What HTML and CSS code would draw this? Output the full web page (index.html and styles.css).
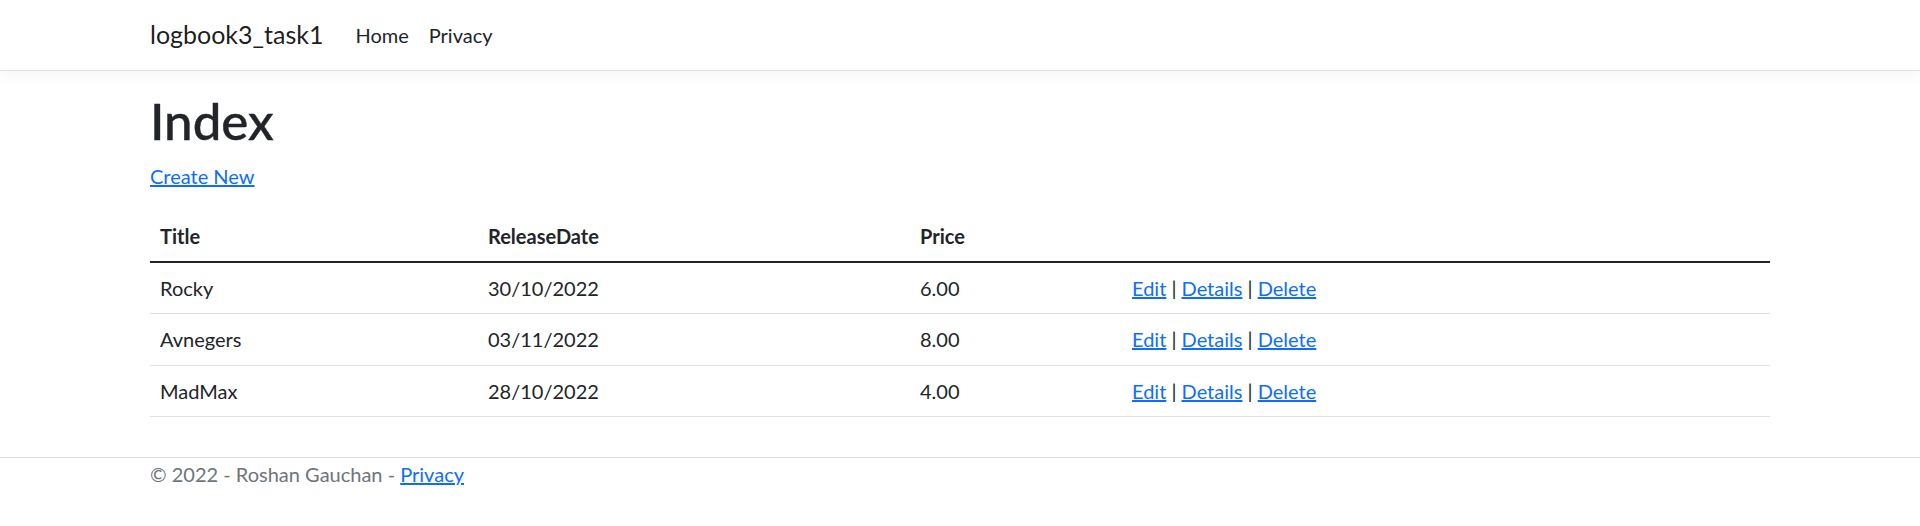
FILE: index.html
```html
<!DOCTYPE html>
<html lang="en">
<head>
<meta charset="utf-8">
<title>Index - logbook3_task1</title>
<link rel="stylesheet" href="styles.css">
</head>
<body>
<header>
  <nav class="navbar">
    <div class="container nav-inner">
      <a class="brand" href="#">logbook3_task1</a>
      <ul class="nav-list">
        <li><a class="nav-link" href="#">Home</a></li>
        <li><a class="nav-link" href="#">Privacy</a></li>
      </ul>
    </div>
  </nav>
</header>
<div class="container">
  <main class="main">
    <h1 class="title">Index</h1>
    <p class="create"><a class="link" href="#">Create New</a></p>
    <table class="table">
      <colgroup>
        <col class="c1"><col class="c2"><col class="c3"><col class="c4">
      </colgroup>
      <thead>
        <tr><th>Title</th><th>ReleaseDate</th><th>Price</th><th></th></tr>
      </thead>
      <tbody>
        <tr><td>Rocky</td><td>30/10/2022</td><td>6.00</td><td><a class="link" href="#">Edit</a> | <a class="link" href="#">Details</a> | <a class="link" href="#">Delete</a></td></tr>
        <tr><td>Avnegers</td><td>03/11/2022</td><td>8.00</td><td><a class="link" href="#">Edit</a> | <a class="link" href="#">Details</a> | <a class="link" href="#">Delete</a></td></tr>
        <tr><td>MadMax</td><td>28/10/2022</td><td>4.00</td><td><a class="link" href="#">Edit</a> | <a class="link" href="#">Details</a> | <a class="link" href="#">Delete</a></td></tr>
      </tbody>
    </table>
  </main>
</div>
<footer class="footer">
  <div class="container">&copy; 2022 - Roshan Gauchan - <a class="link" href="#">Privacy</a></div>
</footer>
</body>
</html>
```
FILE: styles.css
```css
* { box-sizing: border-box; }
html { font-size: 20px; }
body {
  margin: 0;
  font-family: Lato, "Open Sans", "Noto Sans", sans-serif;
  font-size: 20px;
  line-height: 1.5;
  color: #212529;
  background: #fff;
}
.container {
  width: 1620px;
  margin: 0 auto;
}
.navbar {
  padding: 10px 0;
  background: #fff;
  border-bottom: 1px solid #dee2e6;
  box-shadow: 0 5px 15px rgba(0,0,0,.04);
  margin-bottom: 20px;
}
.nav-inner {
  display: flex;
  align-items: center;
}
.brand {
  font-size: 25px;
  line-height: 37.5px;
  padding: 6.25px 0;
  margin-right: 22px;
  color: rgba(0,0,0,.9);
  text-decoration: none;
}
.nav-list {
  display: flex;
  list-style: none;
  margin: 0;
  padding: 0;
}
.nav-link {
  display: block;
  padding: 10px;
  color: #212529;
  text-decoration: none;
}
.main { padding-bottom: 20px; }
.title {
  margin: 0 0 10px;
  font-size: 51px;
  font-weight: 500;
  line-height: 60px;
  -webkit-text-stroke: 0.4px #212529;
}
.create { margin: 0 0 20px; }
.link { color: #0d6efd; text-decoration: underline; }
.table {
  width: 100%;
  border-collapse: collapse;
  margin-bottom: 20px;
  table-layout: fixed;
}
.c1 { width: 328px; }
.c2 { width: 432px; }
.c3 { width: 212px; }
.table th {
  text-align: left;
  font-weight: 700;
  padding: 10px;
  border-bottom: 2px solid #212529;
}
.table td {
  padding: 10px 10px 10.3px;
  border-bottom: 1px solid #dee2e6;
}
.footer {
  border-top: 1px solid #dee2e6;
  color: #6c757d;
  line-height: 33px;
  white-space: nowrap;
}
```
